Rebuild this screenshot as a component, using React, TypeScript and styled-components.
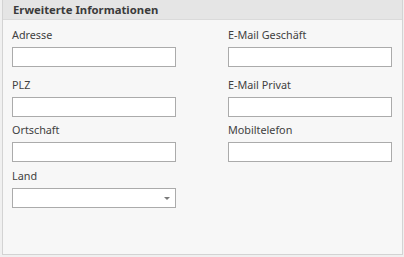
import React from "react";
import styled, { createGlobalStyle } from "styled-components";

const Global = createGlobalStyle`
  html, body { margin: 0; padding: 0; background: #f0f0f0; }
  body { font-family: "Noto Sans", "Open Sans", sans-serif; }
`;

const Panel = styled.section`
  margin: 0 1px 0 2px;
  height: 255px;
  box-sizing: border-box;
  border: 1px solid #d3d3d3;
  border-top: none;
  background: #f7f7f7;
  display: flex;
  flex-direction: column;
`;

const Header = styled.header`
  height: 20px;
  box-sizing: border-box;
  background: #e5e5e5;
  border-bottom: 1px solid #dadada;
  padding-left: 10px;
  font-size: 11.3px;
  font-weight: bold;
  line-height: 20px;
  color: #3b3b3b;
`;

const Grid = styled.div`
  display: grid;
  grid-template-columns: 164px 164px;
  column-gap: 52px;
  padding: 7px 0 0 9px;
`;

const Field = styled.div<{ $gap: number }>`
  display: flex;
  flex-direction: column;
  margin-bottom: ${(p) => p.$gap}px;
`;

const Label = styled.label`
  font-size: 10.8px;
  line-height: 16px;
  height: 16px;
  color: #414141;
  margin-bottom: 4px;
  white-space: nowrap;
`;

const Input = styled.div`
  position: relative;
  height: 20px;
  box-sizing: border-box;
  border: 1px solid #ababab;
  background: #ffffff;
`;

const Arrow = styled.span`
  position: absolute;
  right: 5px;
  top: 8px;
  width: 0;
  height: 0;
  border-left: 3px solid transparent;
  border-right: 3px solid transparent;
  border-top: 3px solid #7a7a7a;
`;

const Empty = styled.div``;

const rows: [string, string | null, number][] = [
  ["Adresse", "E-Mail Geschäft", 10],
  ["PLZ", "E-Mail Privat", 5],
  ["Ortschaft", "Mobiltelefon", 6],
];

export default function App() {
  return (
    <>
      <Global />
      <Panel>
        <Header>Erweiterte Informationen</Header>
        <Grid>
          {rows.map(([l, r, g]) => (
            <React.Fragment key={l}>
              <Field $gap={g}>
                <Label>{l}</Label>
                <Input />
              </Field>
              <Field $gap={g}>
                <Label>{r}</Label>
                <Input />
              </Field>
            </React.Fragment>
          ))}
          <Field $gap={0}>
            <Label>Land</Label>
            <Input>
              <Arrow />
            </Input>
          </Field>
          <Empty />
        </Grid>
      </Panel>
    </>
  );
}
